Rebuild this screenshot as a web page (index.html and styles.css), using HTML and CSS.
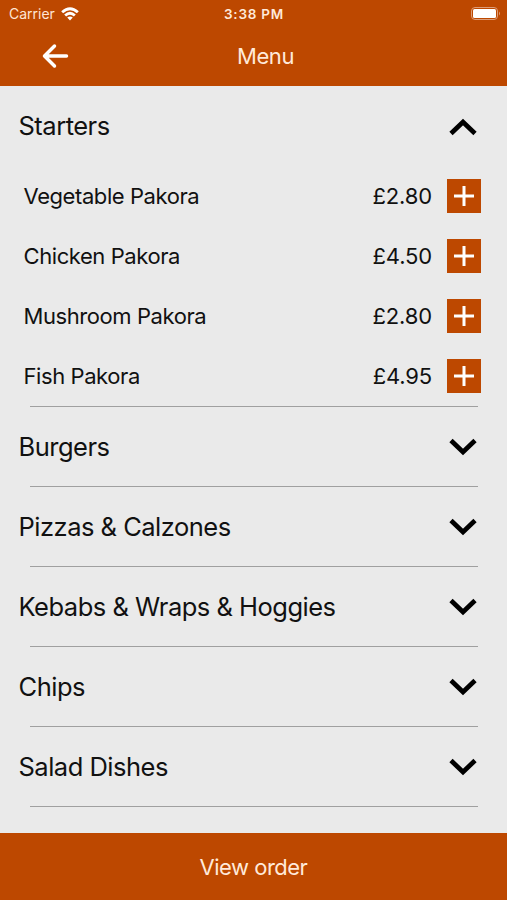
FILE: index.html
```html
<!DOCTYPE html>
<html lang="en">
<head>
<meta charset="utf-8">
<title>Menu</title>
<link rel="stylesheet" href="styles.css">
</head>
<body>
<div class="app">
  <header class="header">
    <div class="status">
      <div class="carrier"><span class="carrier-name">Carrier</span>
        <svg class="wifi" viewBox="0 0 18 14"><path d="M.2 4.300Q9-3.800 17.800 4.300L15.900 6.300Q9 .2 2.100 6.300ZM3.200 7.500Q9 2.200 14.800 7.500L12.900 9.400Q9 6.200 5.100 9.400ZM6.200 10.600Q9 8.200 11.800 10.600L9 13.500Z" fill="#fff"/></svg>
      </div>
      <time class="clock">3:38 PM</time>
      <svg class="battery" viewBox="0 0 30 14"><rect x=".5" y=".5" width="26" height="12" rx="3.500" fill="none" stroke="#dc9d79"/><rect x="2" y="2" width="23" height="9" rx="1.500" fill="#fff"/><path d="M28 4.500q2 2 0 4z" fill="#dc9d79"/></svg>
    </div>
    <div class="navbar">
      <svg class="back" viewBox="0 0 28 26"><path d="M25.500 13H4M13.500 3L3.500 13l10 10" fill="none" stroke="#fff" stroke-width="3.500" stroke-linecap="round" stroke-linejoin="round"/></svg>
      <h1 class="title">Menu</h1>
    </div>
  </header>
  <main class="menu">
    <section class="section starters">
      <div class="heading"><h2>Starters</h2><svg class="chevron" viewBox="0 0 28 18"><path d="M2 15.500L14 4l12 11.500"/></svg></div>
      <div class="item"><span class="name">Vegetable Pakora</span><span class="price">£2.80</span><button class="add" aria-label="Add"><svg viewBox="0 0 34 34"><path d="M17 7v20M7 17h20"/></svg></button></div>
      <div class="item"><span class="name">Chicken Pakora</span><span class="price">£4.50</span><button class="add" aria-label="Add"><svg viewBox="0 0 34 34"><path d="M17 7v20M7 17h20"/></svg></button></div>
      <div class="item"><span class="name">Mushroom Pakora</span><span class="price">£2.80</span><button class="add" aria-label="Add"><svg viewBox="0 0 34 34"><path d="M17 7v20M7 17h20"/></svg></button></div>
      <div class="item"><span class="name">Fish Pakora</span><span class="price">£4.95</span><button class="add" aria-label="Add"><svg viewBox="0 0 34 34"><path d="M17 7v20M7 17h20"/></svg></button></div>
    </section>
    <section class="section"><div class="heading"><h2>Burgers</h2><svg class="chevron" viewBox="0 0 28 18"><path d="M2 2.500L14 14 26 2.500"/></svg></div></section>
    <section class="section"><div class="heading"><h2>Pizzas &amp; Calzones</h2><svg class="chevron" viewBox="0 0 28 18"><path d="M2 2.500L14 14 26 2.500"/></svg></div></section>
    <section class="section"><div class="heading"><h2>Kebabs &amp; Wraps &amp; Hoggies</h2><svg class="chevron" viewBox="0 0 28 18"><path d="M2 2.500L14 14 26 2.500"/></svg></div></section>
    <section class="section"><div class="heading"><h2>Chips</h2><svg class="chevron" viewBox="0 0 28 18"><path d="M2 2.500L14 14 26 2.500"/></svg></div></section>
    <section class="section"><div class="heading"><h2>Salad Dishes</h2><svg class="chevron" viewBox="0 0 28 18"><path d="M2 2.500L14 14 26 2.500"/></svg></div></section>
  </main>
  <button class="order">View order</button>
</div>
</body>
</html>
```
FILE: styles.css
```css
* { box-sizing: border-box; }
body { margin: 0; font-family: Inter, "Liberation Sans", sans-serif; color: #111; }
h1, h2 { margin: 0; font-weight: 400; }
button { border: 0; padding: 0; font: inherit; color: #fff; background: #bd4800; }
.app { height: 900px; display: flex; flex-direction: column; background: #eaeaea; overflow: hidden; }
.header { height: 86px; flex: none; background: #bd4800; color: #fff; }
.status { height: 27px; display: grid; grid-template-columns: 1fr auto 1fr; align-items: center; padding: 0 6px 0 9px; font-size: 14px; }
.carrier { display: flex; align-items: center; gap: 6px; }
.carrier-name { color: #ffe5d4; }
.wifi { width: 18px; height: 14px; }
.clock { font-weight: 600; font-size: 13.500px; letter-spacing: .75px; margin-right: 2px; color: #ffeada; }
.battery { width: 30px; height: 14px; justify-self: end; }
.navbar { height: 58px; display: grid; grid-template-columns: 70px 1fr 46px; align-items: center; }
.back { width: 28px; height: 26px; margin-left: 41px; }
.title { text-align: center; font-size: 22px; letter-spacing: -.4px; color: #ffeada; }
.menu { height: 747px; flex: none; }
.section { height: 80px; display: flex; flex-direction: column; }
.section::after { content: ""; height: 1px; flex: none; margin: auto 29px 0 30px; background: #a0a0a0; }
.starters { height: 321px; }
.heading { height: 79px; flex: none; display: flex; align-items: center; justify-content: space-between; padding: 1px 30px 0 18.500px; }
.starters .heading { height: 80px; }
.heading h2 { font-size: 25.500px; letter-spacing: -.5px; margin-top: -2px; }
.chevron { width: 28px; height: 18px; fill: none; stroke: #000; stroke-width: 4.700; }
.item { height: 60px; flex: none; display: flex; align-items: center; padding: 0 26px 0 23.500px; font-size: 22px; }
.name { flex: 1; letter-spacing: -.42px; }
.price { margin-right: 15px; letter-spacing: -.15px; }
.add { width: 34px; height: 34px; }
.add svg { display: block; width: 34px; height: 34px; fill: none; stroke: #fff; stroke-width: 3; }
.order { height: 67px; flex: none; font-size: 22px; letter-spacing: -.5px; color: #ffeada; }
```
